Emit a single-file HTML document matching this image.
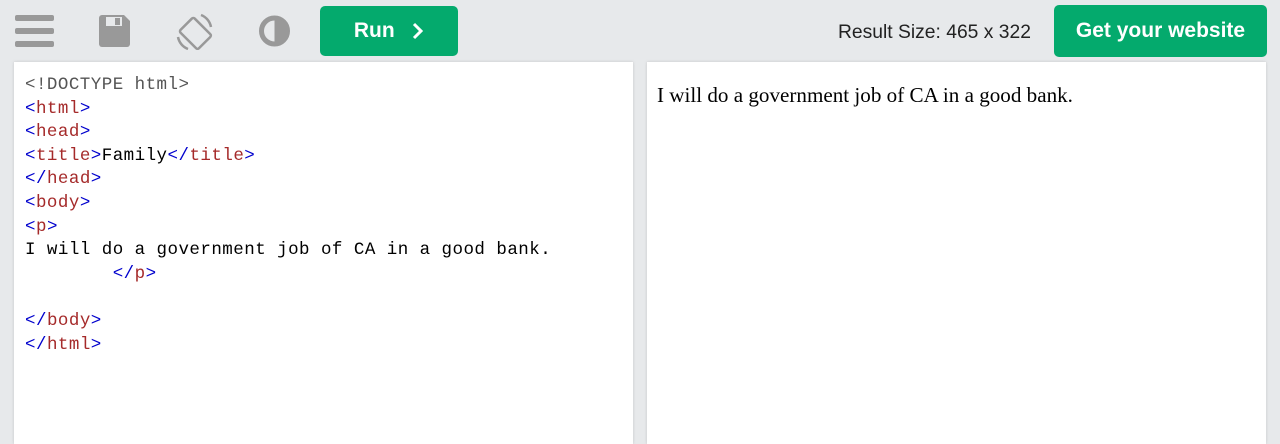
<!DOCTYPE html>
<html><head><style>
body{margin:0;width:1280px;height:444px;background:#e7e9eb;position:relative;overflow:hidden;font-family:"Liberation Sans",sans-serif}
.btn{position:absolute;background:#04aa6d;color:#fff;border-radius:5px;font-weight:bold;font-size:21px;display:flex;align-items:center;justify-content:center}
.panel{position:absolute;top:62px;height:382px;background:#fff;box-shadow:0 0 3px rgba(0,0,0,.15)}
pre{margin:0;position:absolute;left:11px;top:12px;font-family:"Liberation Mono",monospace;font-size:17.5px;letter-spacing:0.46px;line-height:23.6px;color:#000}
.t{color:#a52a2a}.b{color:#0000cd}.g{color:#555}
</style></head><body>
<svg style="position:absolute;left:15px;top:15px" width="40" height="32"><rect x="0" y="0" width="39" height="6" rx="2" fill="#999"/><rect x="0" y="13" width="39" height="6" rx="2" fill="#999"/><rect x="0" y="26" width="39" height="6" rx="2" fill="#999"/></svg>
<svg style="position:absolute;left:99px;top:15px" width="32" height="32"><path d="M3 0h22l6 6v23a3 3 0 0 1-3 3H3a3 3 0 0 1-3-3V3a3 3 0 0 1 3-3z" fill="#999"/><rect x="7" y="2" width="16" height="9" fill="#e7e9eb"/><rect x="16" y="3" width="5" height="7" fill="#999"/></svg>
<svg style="position:absolute;left:175px;top:12px" width="40" height="38" fill="none" stroke="#999" stroke-width="2.5"><rect x="9" y="9" width="20" height="26" rx="2" transform="rotate(-45 19 20)"/><path d="M26 3a16 16 0 0 1 10 12M13 37A16 16 0 0 1 3 25"/></svg>
<svg style="position:absolute;left:258px;top:15px" width="34" height="32"><circle cx="16.5" cy="16" r="13" fill="none" stroke="#999" stroke-width="5"/><path d="M16.5 3a13 13 0 0 1 0 26z" fill="#999"/></svg>
<div class="btn" style="left:320px;top:6px;width:138px;height:50px">Run&nbsp;&nbsp;&nbsp;<svg width="12" height="18"><path d="M2 2l7 7-7 7" stroke="#fff" stroke-width="3" fill="none"/></svg></div>
<div style="position:absolute;left:838px;top:22px;font-size:19.3px;color:#222">Result Size: 465 x 322</div>
<div class="btn" style="left:1054px;top:5px;width:213px;height:52px">Get your website</div>
<div class="panel" style="left:14px;width:619px"><pre><span class="g">&lt;!DOCTYPE html&gt;</span>
<span class="b">&lt;</span><span class="t">html</span><span class="b">&gt;</span>
<span class="b">&lt;</span><span class="t">head</span><span class="b">&gt;</span>
<span class="b">&lt;</span><span class="t">title</span><span class="b">&gt;</span>Family<span class="b">&lt;/</span><span class="t">title</span><span class="b">&gt;</span>
<span class="b">&lt;/</span><span class="t">head</span><span class="b">&gt;</span>
<span class="b">&lt;</span><span class="t">body</span><span class="b">&gt;</span>
<span class="b">&lt;</span><span class="t">p</span><span class="b">&gt;</span>
I will do a government job of CA in a good bank.
        <span class="b">&lt;/</span><span class="t">p</span><span class="b">&gt;</span>

<span class="b">&lt;/</span><span class="t">body</span><span class="b">&gt;</span>
<span class="b">&lt;/</span><span class="t">html</span><span class="b">&gt;</span></pre></div>
<div class="panel" style="left:647px;width:619px"><div style="position:absolute;left:10px;top:21px;font-family:'Liberation Serif',serif;font-size:21.1px">I will do a government job of CA in a good bank.</div></div>
</body></html>
